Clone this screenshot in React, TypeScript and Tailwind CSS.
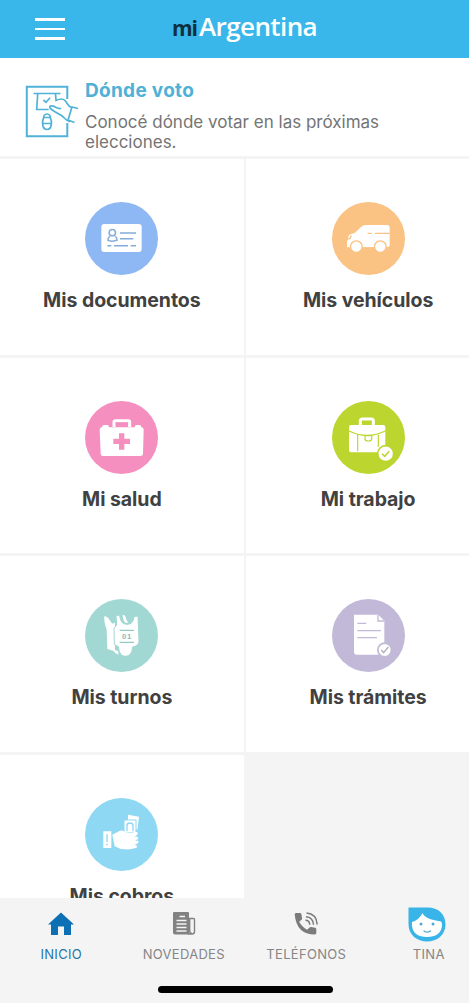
import { ReactNode } from "react";

const DocumentsIcon = () => (
    <svg viewBox="32 36 219 219" className="size-full">
        <rect x="81" y="102" width="121" height="84" rx="9" fill="#fff" />
        <g fill="none" stroke="#84add9" strokeWidth="4.5">
            <circle cx="114" cy="128" r="9.5" />
            <path d="M106 139c-3 3-5 7-5 12 8 3 18 3 27 0 0-5-2-9-5-12M137 129h48M137 146h40M99 167h12M119 167h42M169 167h16" />
        </g>
    </svg>
)

const CarIcon = () => (
    <svg viewBox="36 36 219 219" className="size-full">
        <path d="M81 172v-19l4-4v-10q1-6 9-7l10-3 19-18q6-6 14-6h63q9 0 9 9v50q0 7-7 7z" fill="#fff" />
        <g fill="#fff" stroke="#fac283" strokeWidth="4">
            <circle cx="109" cy="170" r="17.5" />
            <circle cx="181" cy="170" r="17.5" />
        </g>
        <path d="M143 130h12M165 130h44M86 147c6 0 7-4 7-11" fill="none" stroke="#fac283" strokeWidth="4" />
    </svg>
)

const HealthIcon = () => (
    <svg viewBox="32 30 219 219" className="size-full">
        <path d="M119 108V93q0-4 4-4h39q4 0 4 4v15" fill="none" stroke="#fff" strokeWidth="9" />
        <path d="M124 96h36M124 102h36" stroke="#f58fc0" strokeWidth="2.5" />
        <path d="M83 109q0-7 6-7h9q6 0 6 7h77q0-7 6-7h8q6 0 6 7 7 0 7 7l-2 72q0 7-7 7H86q-7 0-7-7l-3-72q0-7 7-7z" fill="#fff" />
        <path d="M134 127h16v16h17v16h-17v17h-16v-17h-17v-16h17z" fill="#f58fc0" />
    </svg>
)

const WorkIcon = () => (
    <svg viewBox="36 30 219 219" className="size-full">
        <path d="M121 104V90q0-6 6-6h27q6 0 6 6v14" fill="none" stroke="#fff" strokeWidth="9" />
        <path d="M94 102h96q6 0 6 6v68q0 8-8 8H94q-7 0-7-7v-69q0-6 7-6z" fill="#fff" />
        <path d="M86 119q26 14 55 14t56-14M113 131v50M175 131v36" fill="none" stroke="#bcd52f" strokeWidth="3.5" />
        <path d="M135 134v9q0 7 10 7t10-7v-9z" fill="#fff" stroke="#bcd52f" strokeWidth="3.5" />
        <circle cx="197" cy="188" r="24" fill="#fff" stroke="#bcd52f" strokeWidth="5" />
        <path d="M186 188l8 8 14-15" fill="none" stroke="#bcd52f" strokeWidth="4.5" />
    </svg>
)

const TurnsIcon = () => (
    <svg viewBox="32 27 219 219" className="size-full">
        <path d="M90 79Q101 80 106 91L114 101L122 98V180L132 184V194Q122 191 118 183L99 177L97 118Q88 96 90 79Z" fill="#fff" />
        <path d="M145 74Q153 75 154 82Q155 90 161 96Q158 101 154 98Q145 91 145 74Z" fill="#fff" />
        <path d="M125 76H136Q138 103 158 103Q177 103 179 80L191 78L194 154Q194 164 184 168L175 171Q173 199 153 199Q135 199 132 170L120 163L119 115L127 105Z" fill="#fff" stroke="#a2d8d3" strokeWidth="3" />
        <path d="M136 121h43M136 157h43" stroke="#94c9c5" strokeWidth="4" />
        <text x="158" y="147" textAnchor="middle" fontFamily="Liberation Sans" fontWeight="700" fontSize="23" letterSpacing="2" fill="#7fbdb7">01</text>
    </svg>
)

const PaperworkIcon = () => (
    <svg viewBox="36 27 219 219" className="size-full">
        <path d="M102 74h73l18 18v102h-84q-7 0-7-7z" fill="#fff" />
        <path d="M174 75v18h18M112 100h27M112 122h71M112 143h59" fill="none" stroke="#c2b9d9" strokeWidth="4" />
        <circle cx="194" cy="180" r="23" fill="#c2b9d9" />
        <circle cx="194" cy="180" r="19" fill="#fff" stroke="#bbb5c6" strokeWidth="2" />
        <path d="M184 180l7 8 14-17" fill="none" stroke="#b4b1bd" strokeWidth="4.5" />
    </svg>
)

const PaymentsIcon = () => (
    <svg viewBox="78 36 219 219" className="size-full">
        <path d="M207 86l33 6-5 41-28-31z" fill="#fff" />
        <path d="M195 102h36v38h-36z" fill="#fff" stroke="#8ed8f3" strokeWidth="3" />
        <path d="M204 136v-17q0-8 9-8t9 8v17" fill="none" stroke="#8ed8f3" strokeWidth="4" />
        <path d="M133 136h24v50h-24zM160 146l17-9q8-5 14-3l10 5q15 3 29-2 7 0 6 7-2 5-10 8h9q4 3 2 7l-9 5h9q4 4 0 8l-10 5 7 2q2 6-7 8-12 4-28 3-18 0-32-9z" fill="#fff" />
        <path d="M144 145v23M144 173v5" stroke="#8ed8f3" strokeWidth="4" />
    </svg>
)

const VoteIcon = () => (
    <svg viewBox="0 0 75 75" className="size-[75px] shrink-0" fill="none" stroke="#51b2d7" strokeWidth="1.7">
        <path d="M52.3 48v13.3H11.8V11.8h40.5V24" strokeWidth="2" />
        <path d="M18.5 18.5h27M22.7 19l-1 15.5h12M40.5 19l.6 6.500M28.500 25l2.500 2.300 4-4.500" />
        <path d="M41 25.500c3-1.500 7-2 9 0 2.500 3 3.500 6 6 6.800M45.500 33.500c-3.500.500-6.500-3.500-10-2.500-2.500 1 1.500 4 4 5.500l7 4c3 2 4 5 8 6" strokeLinecap="round" />
        <path d="M63 33.500l-6-1.500-4 13 6.500 2.500" />
        <path d="M32 39c-2.500 0-3.500 2-3.300 3.500-2 4-1.700 12 3.300 12s5.300-8 3.300-12C35.500 41 34.500 39 32 39zM27.500 48.500h9M28.700 42.500h6.600" />
    </svg>
)

const HomeIcon = () => (
    <svg viewBox="0 0 26 24" className="h-6 w-[26px]" fill="#0d70b4">
        <path d="M13 .5L26 12.500h-3V23h-7v-8.500h-6V23H3V12.500H0z" />
    </svg>
)

const NewsIcon = () => (
    <svg viewBox="0 0 26 24" className="h-6 w-[26px]">
        <path d="M3 0h14q1 0 1 1v21.500H4q-2 0-2-2V1q0-1 1-1z" fill="#828282" />
        <path d="M18 6.500h4.500q1 0 1 1V19.500q0 2.500-2.500 2.500h-4M18.700 7v12q0 2.500 2.300 2.500" fill="none" stroke="#828282" strokeWidth="1.400" />
        <path d="M8.500 4.500h5.500M5.500 8.500h10M5.500 12h10M5.500 15.500h10M5.500 19h10" stroke="#f4f4f4" strokeWidth="1.400" />
    </svg>
)

const PhoneIcon = () => (
    <svg viewBox="0 0 26 24" className="h-6 w-[26px]">
        <path d="M3 1h4q1.300 0 1.400 1.200l.7 4q.1 1-.6 1.600L6.200 9.800q2.700 5.200 8 8l2.300-2.300q.7-.7 1.600-.5l4 .7q1.200.200 1.200 1.400v4q0 1.400-1.400 1.400Q3.500 22.500 1.700 2.500 1.600 1 3 1z" fill="#7b7b7b" />
        <path d="M12.500 8.300q4 0 4.300 4.500M13 4.700q7 .4 7.500 8M13.500 1q10 .7 10.700 11.500" fill="none" stroke="#7b7b7b" strokeWidth="1.500" />
    </svg>
)

const TinaIcon = () => (
    <svg viewBox="0 0 38 35" className="mr-[4px] h-[35px] w-[38px]">
        <path d="M.5.500H20C30 .500 37.500 7 37.500 17.500S29 34.500 19 34.500.5 28 .5 17z" fill="#39b4e8" />
        <path d="M4 15q7-2 10.500-9 2 6 18.500 8.500 1.500 1.500 1 4.500-1.500 11-15 11T4 19z" fill="#fff" />
        <circle cx="13" cy="17" r="1.500" fill="#51a9d0" />
        <circle cx="25" cy="17" r="1.500" fill="#51a9d0" />
        <path d="M16 24q3 2.500 6.500 0" fill="none" stroke="#51a9d0" strokeWidth="1.200" strokeLinecap="round" />
    </svg>
)

const Tile = ({ color, label, children }: { color: string, label: string, children: ReactNode }) => (
    <button className="flex flex-col items-center bg-white pt-[43px]">
        <span className={`size-[73px] rounded-full ${color}`}>{children}</span>
        <span className="mt-[11px] text-[19.5px] leading-7 font-bold tracking-[-0.050px] text-[#414141]">{label}</span>
    </button>
)

const Tab = ({ label, active, children }: { label: string, active?: boolean, children: ReactNode }) => (
    <button className="flex flex-1 flex-col items-center">
        <span className="flex h-[36px] items-center">{children}</span>
        <span className={`mt-[2px] text-[13px] leading-5 tracking-[0.300px] ${active ? "text-[#2875a8]" : "text-[#858585]"}`}>{label}</span>
    </button>
)

const App = () => {
    return (
        <div className="h-[1003px] w-full overflow-hidden bg-[#f4f4f4] font-['Inter','Liberation_Sans',sans-serif]">
            <div className="flex h-full w-[490px] flex-col">
                <header className="flex h-[58px] shrink-0 items-center bg-[#39b7ea] pl-[35px]">
                    <button className="flex w-[30px] flex-col gap-[7px]">
                        <span className="h-[2.500px] bg-white" />
                        <span className="h-[2.500px] bg-white" />
                        <span className="h-[2.500px] bg-white" />
                    </button>
                    <h1 className="ml-[107px] flex items-baseline pb-1 font-['Open_Sans','Noto_Sans',sans-serif] leading-8">
                        <span className="text-[21px] font-bold tracking-[-1px] text-[#102f3d]">mi</span>
                        <span className="ml-[2px] text-[26px] font-semibold tracking-[-0.600px] text-white">Argentina</span>
                    </h1>
                </header>
                <main className="min-h-0 flex-1 overflow-hidden">
                    <section className="flex h-[98px] bg-white pt-[17px] pl-[15px]">
                        <VoteIcon />
                        <div className="-ml-[5px] w-[320px]">
                            <h2 className="pt-px text-[19px] leading-[30px] font-bold tracking-[0.300px] text-[#4fb1d6]">Dónde voto</h2>
                            <p className="mt-[6px] text-[17px] leading-5 text-[#747474]">Conocé dónde votar en las próximas elecciones.</p>
                        </div>
                    </section>
                    <section className="mt-[3px] grid auto-rows-[195.500px] grid-cols-2 gap-x-[2.500px] gap-y-[3px]">
                        <Tile color="bg-[#8db8f4]" label="Mis documentos"><DocumentsIcon /></Tile>
                        <Tile color="bg-[#fac283]" label="Mis vehículos"><CarIcon /></Tile>
                        <Tile color="bg-[#f58fc0]" label="Mi salud"><HealthIcon /></Tile>
                        <Tile color="bg-[#bcd52f]" label="Mi trabajo"><WorkIcon /></Tile>
                        <Tile color="bg-[#a2d8d3]" label="Mis turnos"><TurnsIcon /></Tile>
                        <Tile color="bg-[#c2b9d9]" label="Mis trámites"><PaperworkIcon /></Tile>
                        <Tile color="bg-[#8ed8f3]" label="Mis cobros"><PaymentsIcon /></Tile>
                    </section>
                </main>
                <nav className="flex h-[105px] shrink-0 flex-col items-center pt-[8px]">
                    <div className="flex w-full">
                        <Tab label="INICIO" active><HomeIcon /></Tab>
                        <Tab label="NOVEDADES"><NewsIcon /></Tab>
                        <Tab label="TELÉFONOS"><PhoneIcon /></Tab>
                        <Tab label="TINA"><TinaIcon /></Tab>
                    </div>
                    <div className="mt-[22px] h-[6.500px] w-[175px] rounded-full bg-black" />
                </nav>
            </div>
        </div>
    )
}

export default App
